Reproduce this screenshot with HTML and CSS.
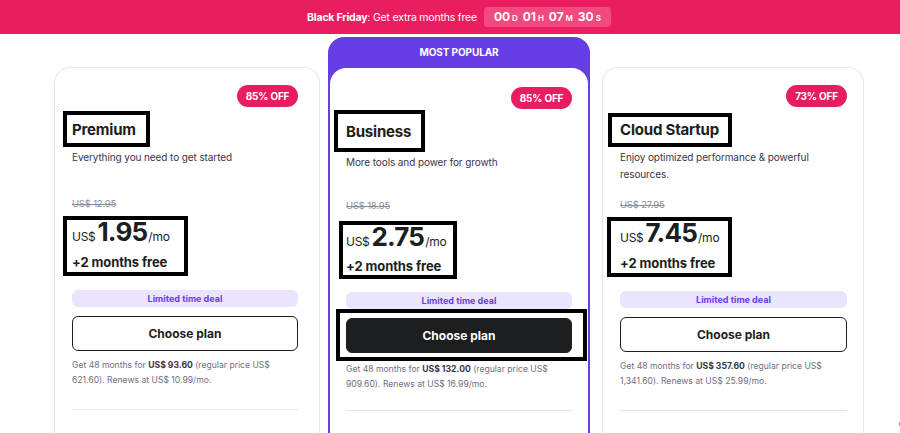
FILE: index.html
```html
<!DOCTYPE html>
<html lang="en">
<head>
<meta charset="utf-8">
<title>Plans</title>
<link rel="stylesheet" href="styles.css">
</head>
<body>
<div class="promo">
  <span class="promo-text"><b>Black Friday</b>: Get extra months free</span>
  <span class="timer">
    <span class="t-num">00</span><span class="t-unit">D</span>
    <span class="t-num">01</span><span class="t-unit">H</span>
    <span class="t-num">07</span><span class="t-unit">M</span>
    <span class="t-num">30</span><span class="t-unit">S</span>
  </span>
</div>
<main class="plans">
  <section class="card card-side card-1">
    <div class="card-body">
      <div class="badge-row"><span class="badge">85% OFF</span></div>
      <div class="mark mark-t1"><h2 class="title">Premium</h2></div>
      <p class="subtitle">Everything you need to get started</p>
      <p class="old">US$ 12.95</p>
      <div class="mark mark-p1">
        <div class="price"><span class="cur">US$</span><span class="amount">1.95</span><span class="per">/mo</span></div>
        <div class="bonus">+2 months free</div>
      </div>
      <div class="deal">Limited time deal</div>
      <button class="btn">Choose plan</button>
      <p class="note">Get 48 months for <b>US$ 93.60</b> (regular price US$<br>621.60). Renews at US$ 10.99/mo.</p>
      <div class="divider"></div>
    </div>
  </section>
  <section class="card card-pop">
    <div class="pop-head">MOST POPULAR</div>
    <div class="card-body pop-body">
      <div class="badge-row"><span class="badge">85% OFF</span></div>
      <div class="mark mark-t2"><h2 class="title">Business</h2></div>
      <p class="subtitle">More tools and power for growth</p>
      <p class="old">US$ 18.95</p>
      <div class="mark mark-p2">
        <div class="price"><span class="cur">US$</span><span class="amount">2.75</span><span class="per">/mo</span></div>
        <div class="bonus">+2 months free</div>
      </div>
      <div class="deal">Limited time deal</div>
      <div class="mark mark-b2"><button class="btn btn-dark">Choose plan</button></div>
      <p class="note">Get 48 months for <b>US$ 132.00</b> (regular price US$<br>909.60). Renews at US$ 16.99/mo.</p>
      <div class="divider"></div>
    </div>
  </section>
  <section class="card card-side card-3">
    <div class="card-body">
      <div class="badge-row"><span class="badge">73% OFF</span></div>
      <div class="mark mark-t3"><h2 class="title">Cloud Startup</h2></div>
      <p class="subtitle">Enjoy optimized performance &amp; powerful<br>resources.</p>
      <p class="old">US$ 27.95</p>
      <div class="mark mark-p3">
        <div class="price"><span class="cur">US$</span><span class="amount">7.45</span><span class="per">/mo</span></div>
        <div class="bonus">+2 months free</div>
      </div>
      <div class="deal">Limited time deal</div>
      <button class="btn">Choose plan</button>
      <p class="note">Get 48 months for <b>US$ 357.60</b> (regular price US$<br>1,341.60). Renews at US$ 25.99/mo.</p>
      <div class="divider"></div>
    </div>
  </section>
</main>
<div class="chat-widget" aria-hidden="true"></div>
</body>
</html>
```
FILE: styles.css
```css
* { box-sizing: border-box; }
html, body { margin: 0; padding: 0; }
body {
  width: 900px;
  height: 433px;
  overflow: hidden;
  background: #ffffff;
  font-family: Inter, "Noto Sans", "Liberation Sans", sans-serif;
  color: #1d1e20;
}
p, h2 { margin: 0; }

/* promo banner */
.promo {
  height: 34px;
  background: #ea1d5f;
  display: flex;
  align-items: center;
  justify-content: center;
  gap: 7px;
  padding-left: 18px;
  color: #fff;
}
.promo-text { font-size: 10.5px; letter-spacing: -0.2px; }
.promo-text b { font-weight: 700; }
.timer {
  display: flex;
  align-items: baseline;
  background: #f2497f;
  border-radius: 4px;
  height: 20px;
  width: 127px;
  padding: 0 10px;
  line-height: 20px;
  justify-content: space-between;
}
.t-num { font-size: 12px; font-weight: 700; }
.t-unit { font-size: 8px; font-weight: 600; margin-left: 1px; margin-right: 4px; }
.t-unit:last-child { margin-right: 0; }

/* plans row */
.plans {
  display: flex;
  align-items: flex-start;
  gap: 8px;
  padding: 3px 0 0 54px;
}
.card { flex: none; }
.card-side {
  margin-top: 30px;
  height: 420px;
  border: 1px solid #e3e5f4;
  border-bottom: none;
  border-radius: 16px 16px 0 0;
}
.card-1 { width: 266px; }
.card-3 { width: 262px; margin-left: 4px; }
.card-1 .card-body { padding: 17px 21px 0 17px; }
.card-3 .card-body { padding: 17px 16px 0 17px; }
.card-body {
  display: flex;
  flex-direction: column;
}

.card-pop {
  width: 262px;
  background: #673de6;
  border-radius: 16px 16px 0 0;
  padding: 0 2px;
  height: 420px;
}
.pop-head {
  height: 31px;
  line-height: 31px;
  text-align: center;
  color: #fff;
  font-size: 10px;
  font-weight: 700;
  letter-spacing: -0.1px;
}
.pop-body {
  background: #fff;
  border-radius: 16px 16px 0 0;
  height: 389px;
  padding: 19px 16px 0 16px;
}

.badge-row { display: flex; justify-content: flex-end; }
.badge {
  height: 22px;
  line-height: 22px;
  width: 61px;
  text-align: center;
  border-radius: 11px;
  background: #e71d5f;
  color: #fff;
  font-size: 10px;
  font-weight: 700;
  letter-spacing: -0.2px;
}

/* annotation boxes */
.mark {
  align-self: flex-start;
  border: 4px solid #000;
}
.mark-t1 { margin: 4px 0 0 -9px; width: 87px; padding: 6px 0 4px 5px; }
.mark-t2 { margin: 1px 0 0 -12px; width: 91px; padding: 9px 0 7px 8px; }
.mark-t3 { margin: 6px 0 0 -12px; width: 124px; padding: 4px 0 4px 8px; }
.mark-p1 { margin: 5px 0 0 -9px; width: 125px; padding: 0 0 1px 5px; }
.mark-p2 { margin: 8px 0 0 -7px; width: 118px; padding: 0 0 0 3px; }
.mark-p3 { margin: 5px 0 0 -13px; width: 125px; padding: 0 0 1px 9px; }
.mark-b2 { margin: 0 0 0 -10px; width: 251px; padding: 5px 0 4px 6px; }

.title {
  font-size: 15px;
  line-height: 18px;
  font-weight: 700;
  letter-spacing: -0.2px;
  white-space: nowrap;
}
.subtitle {
  margin-top: 2px;
  min-height: 32px;
  font-size: 10px;
  line-height: 16.5px;
  color: #36344d;
  letter-spacing: -0.1px;
}
.old {
  margin-top: 16px;
  font-size: 9.5px;
  line-height: 14px;
  color: #8a8b9a;
  text-decoration: line-through;
  letter-spacing: -0.2px;
}
.pop-body .old { margin-top: 13px; }

.price {
  display: flex;
  align-items: baseline;
  height: 24px;
  line-height: 24px;
  white-space: nowrap;
}
.cur { font-size: 12px; letter-spacing: -0.3px; }
.amount { font-size: 26px; font-weight: 700; margin-left: 2px; letter-spacing: -0.8px; }
.per { font-size: 12px; margin-left: 1px; letter-spacing: -0.2px; }
.bonus {
  margin-top: 9px;
  font-size: 13px;
  line-height: 18px;
  font-weight: 700;
  letter-spacing: -0.1px;
  white-space: nowrap;
}
.mark-p2 .bonus { margin-top: 8px; }

.deal {
  margin-top: 14px;
  height: 17px;
  line-height: 17px;
  border-radius: 6px;
  background: #ebe4ff;
  color: #673de6;
  font-size: 9px;
  font-weight: 700;
  text-align: center;
}
.pop-body .deal { margin-top: 13px; }

.btn {
  margin-top: 9px;
  height: 35px;
  width: 100%;
  border: 1.5px solid #1d1e20;
  border-radius: 6px;
  background: #fff;
  color: #1d1e20;
  font-family: inherit;
  font-size: 12px;
  font-weight: 700;
  cursor: pointer;
}
.btn-dark {
  margin-top: 0;
  width: 226px;
  display: block;
  background: #1d1e20;
  color: #fff;
}

.note {
  margin-top: 7px;
  font-size: 8.6px;
  line-height: 15px;
  color: #6d7081;
  white-space: nowrap;
}
.note b { font-weight: 700; color: #36344d; }
.pop-body .note { margin-top: 1px; }
.divider {
  margin-top: 21px;
  height: 1px;
  background: #e3e4f0;
}
.pop-body .divider { margin-top: 18px; }

/* floating chat widget, mostly off-screen */
.chat-widget {
  position: fixed;
  left: 899px;
  top: 420px;
  width: 10px;
  height: 8px;
  border-radius: 50%;
  background: #8c6cf0;
}
```
